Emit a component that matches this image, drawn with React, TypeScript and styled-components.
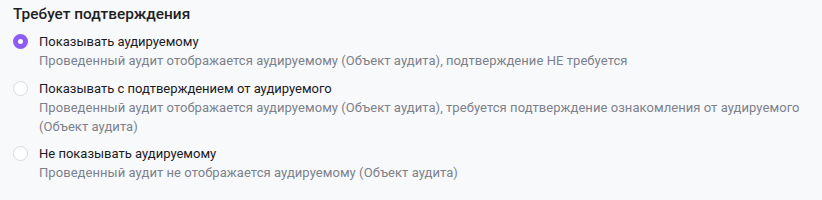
import React, { useState } from 'react';
import styled, { createGlobalStyle } from 'styled-components';

const GlobalStyle = createGlobalStyle`
  html, body {
    margin: 0;
    padding: 0;
    background: #f8f9fb;
  }
  body {
    font-family: Roboto, 'Noto Sans', sans-serif;
    -webkit-font-smoothing: antialiased;
  }
`;

const options = [
  {
    id: 'show',
    label: 'Показывать аудируемому',
    hint: 'Проведенный аудит отображается аудируемому (Объект аудита), подтверждение НЕ требуется',
  },
  {
    id: 'confirm',
    label: 'Показывать с подтверждением от аудируемого',
    hint: 'Проведенный аудит отображается аудируемому (Объект аудита), требуется подтверждение ознакомления от аудируемого (Объект аудита)',
  },
  {
    id: 'hide',
    label: 'Не показывать аудируемому',
    hint: 'Проведенный аудит не отображается аудируемому (Объект аудита)',
  },
];

/* ---------------------------------------------------------------------- */

export default function App() {
  const [value, setValue] = useState('show');

  return (
    <>
      <GlobalStyle />
      <Section>
        <Title>Требует подтверждения</Title>
        <List>
          {options.map((o) => (
            <Option key={o.id} onClick={() => setValue(o.id)}>
              <Radio $checked={value === o.id} />
              <Text>
                <Label>{o.label}</Label>
                <Hint>{o.hint}</Hint>
              </Text>
            </Option>
          ))}
        </List>
      </Section>
    </>
  );
}

/* ---------------------------------------------------------------------- */

const Section = styled.div`
  width: 808px;
  padding: 4px 0 0 13px;
  box-sizing: border-box;
`;

const Title = styled.div`
  font-size: 15.4px;
  font-weight: 500;
  line-height: 20px;
  color: #1f1f24;
  margin-bottom: 8px;
`;

const List = styled.div`
  display: flex;
  flex-direction: column;
  gap: 8.5px;
`;

const Option = styled.label`
  display: flex;
  align-items: flex-start;
  gap: 11px;
  cursor: pointer;
`;

const Radio = styled.span<{ $checked: boolean }>`
  flex: none;
  width: 15px;
  height: 15px;
  margin-top: 2px;
  border-radius: 50%;
  box-sizing: border-box;
  background: #ffffff;
  border: ${(p) => (p.$checked ? '5px solid #8b5cf6' : '1px solid #d6d9de')};
`;

const Text = styled.div`
  display: flex;
  flex-direction: column;
`;

const Label = styled.div`
  font-size: 13px;
  line-height: 19px;
  color: #1a1a1f;
`;

const Hint = styled.div`
  font-size: 13px;
  line-height: 19px;
  letter-spacing: 0.06px;
  color: #7c818b;
`;
